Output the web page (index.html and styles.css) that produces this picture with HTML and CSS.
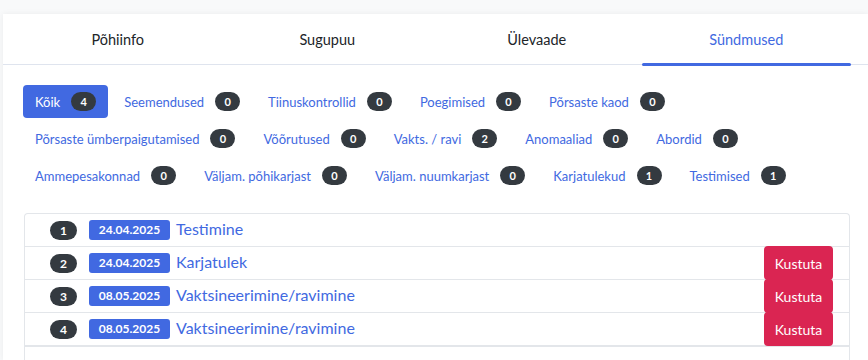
FILE: index.html
```html
<!DOCTYPE html>
<html lang="et">
<head>
  <meta charset="UTF-8">
  <title>Sündmused</title>
  <link rel="stylesheet" href="styles.css">
</head>
<body>

  <div class="card">
    <div class="tab-header">
      <div class="tabs">
        <div class="tab">Põhiinfo</div>
        <div class="tab">Sugupuu</div>
        <div class="tab">Ülevaade</div>
        <div class="tab active">Sündmused</div>
      </div>
    </div>

    <div class="card-body">
      <!-- Filters -->
      <div class="filters">
        <a class="filter active">Kõik <span class="count">4</span></a>
        <a class="filter">Seemendused <span class="count">0</span></a>
        <a class="filter">Tiinuskontrollid <span class="count">0</span></a>
        <a class="filter">Poegimised <span class="count">0</span></a>
        <a class="filter">Põrsaste kaod <span class="count">0</span></a>
        <a class="filter">Põrsaste ümberpaigutamised <span class="count">0</span></a>
        <a class="filter">Võõrutused <span class="count">0</span></a>
        <a class="filter">Vakts. / ravi <span class="count">2</span></a>
        <a class="filter">Anomaaliad <span class="count">0</span></a>
        <a class="filter">Abordid <span class="count">0</span></a>
        <a class="filter">Ammepesakonnad <span class="count">0</span></a>
        <a class="filter">Väljam. põhikarjast <span class="count">0</span></a>
        <a class="filter">Väljam. nuumkarjast <span class="count">0</span></a>
        <a class="filter">Karjatulekud <span class="count">1</span></a>
        <a class="filter">Testimised <span class="count">1</span></a>
      </div>

      <!-- Events list -->
      <div class="event-list">
        <div class="event-row">
          <span class="num">1</span>
          <span class="date">24.04.2025</span>
          <a class="event-title">Testimine</a>
        </div>
        <div class="event-row">
          <span class="num">2</span>
          <span class="date">24.04.2025</span>
          <a class="event-title">Karjatulek</a>
          <button class="delete-btn">Kustuta</button>
        </div>
        <div class="event-row">
          <span class="num">3</span>
          <span class="date">08.05.2025</span>
          <a class="event-title">Vaktsineerimine/ravimine</a>
          <button class="delete-btn">Kustuta</button>
        </div>
        <div class="event-row">
          <span class="num">4</span>
          <span class="date">08.05.2025</span>
          <a class="event-title">Vaktsineerimine/ravimine</a>
          <button class="delete-btn">Kustuta</button>
        </div>
      </div>
    </div>
  </div>

</body>
</html>
```

FILE: styles.css
```css
body {
  margin: 0;
  background: #f8f9fa;
  font-family: Lato, 'Noto Sans', sans-serif;
  color: #212529;
  overflow: hidden;
}

.card {
  margin: 14px 0 0 3px;
  background: #fff;
  box-shadow: 0 0 6px rgba(0, 0, 0, 0.06);
  height: 346px;
}

.tab-header {
  border-bottom: 1px solid #dfe4ee;
}

.tabs {
  display: flex;
  width: 838px;
  margin-left: 10px;
}

.tab {
  flex: 1;
  height: 50px;
  display: flex;
  align-items: center;
  justify-content: center;
  font-size: 14.5px;
  position: relative;
}

.tab.active {
  color: #4169e1;
}

.tab.active::after {
  content: "";
  position: absolute;
  left: 0;
  right: 0;
  bottom: -2px;
  height: 3px;
  border-radius: 2px;
  background: #4169e1;
}

.card-body {
  padding: 20px 17px 0 20px;
}

.filters {
  display: flex;
  flex-wrap: wrap;
  gap: 4px;
}

.filter {
  display: flex;
  align-items: center;
  gap: 11px;
  height: 33px;
  padding: 0 12px;
  border-radius: 4px;
  font-size: 13px;
  color: #4169e1;
  cursor: pointer;
}

.filter.active {
  background: #4169e1;
  color: #fff;
}

.count {
  display: inline-flex;
  align-items: center;
  justify-content: center;
  width: 25px;
  height: 19px;
  border-radius: 10px;
  background: #343a40;
  color: #fff;
  font-size: 11px;
  font-weight: bold;
}

.event-list {
  margin: 21px 1px 0 1px;
  border: 1px solid #e3e6ea;
  border-bottom: none;
  border-radius: 4px 4px 0 0;
  height: 146px;
}

.event-row {
  display: flex;
  align-items: center;
  height: 32px;
  padding-left: 25px;
  border-bottom: 1px solid #e3e6ea;
}

.event-row:nth-child(4) {
  border-bottom-width: 2px;
}

.num {
  display: inline-flex;
  align-items: center;
  justify-content: center;
  width: 27px;
  height: 19px;
  border-radius: 10px;
  background: #343a40;
  color: #fff;
  font-size: 12px;
  font-weight: bold;
}

.date {
  margin-left: 12px;
  width: 81px;
  height: 20px;
  line-height: 20px;
  text-align: center;
  border-radius: 3px;
  background: #4169e1;
  color: #fff;
  font-size: 12px;
  font-weight: bold;
}

.event-title {
  margin: 0 0 4px 6px;
  font-size: 16px;
  color: #4169e1;
}

.delete-btn {
  margin: 0 16px 0 auto;
  width: 69px;
  height: 34px;
  border: none;
  border-radius: 4px;
  background: #da2552;
  color: #fff;
  font-family: inherit;
  font-size: 14px;
}
```
